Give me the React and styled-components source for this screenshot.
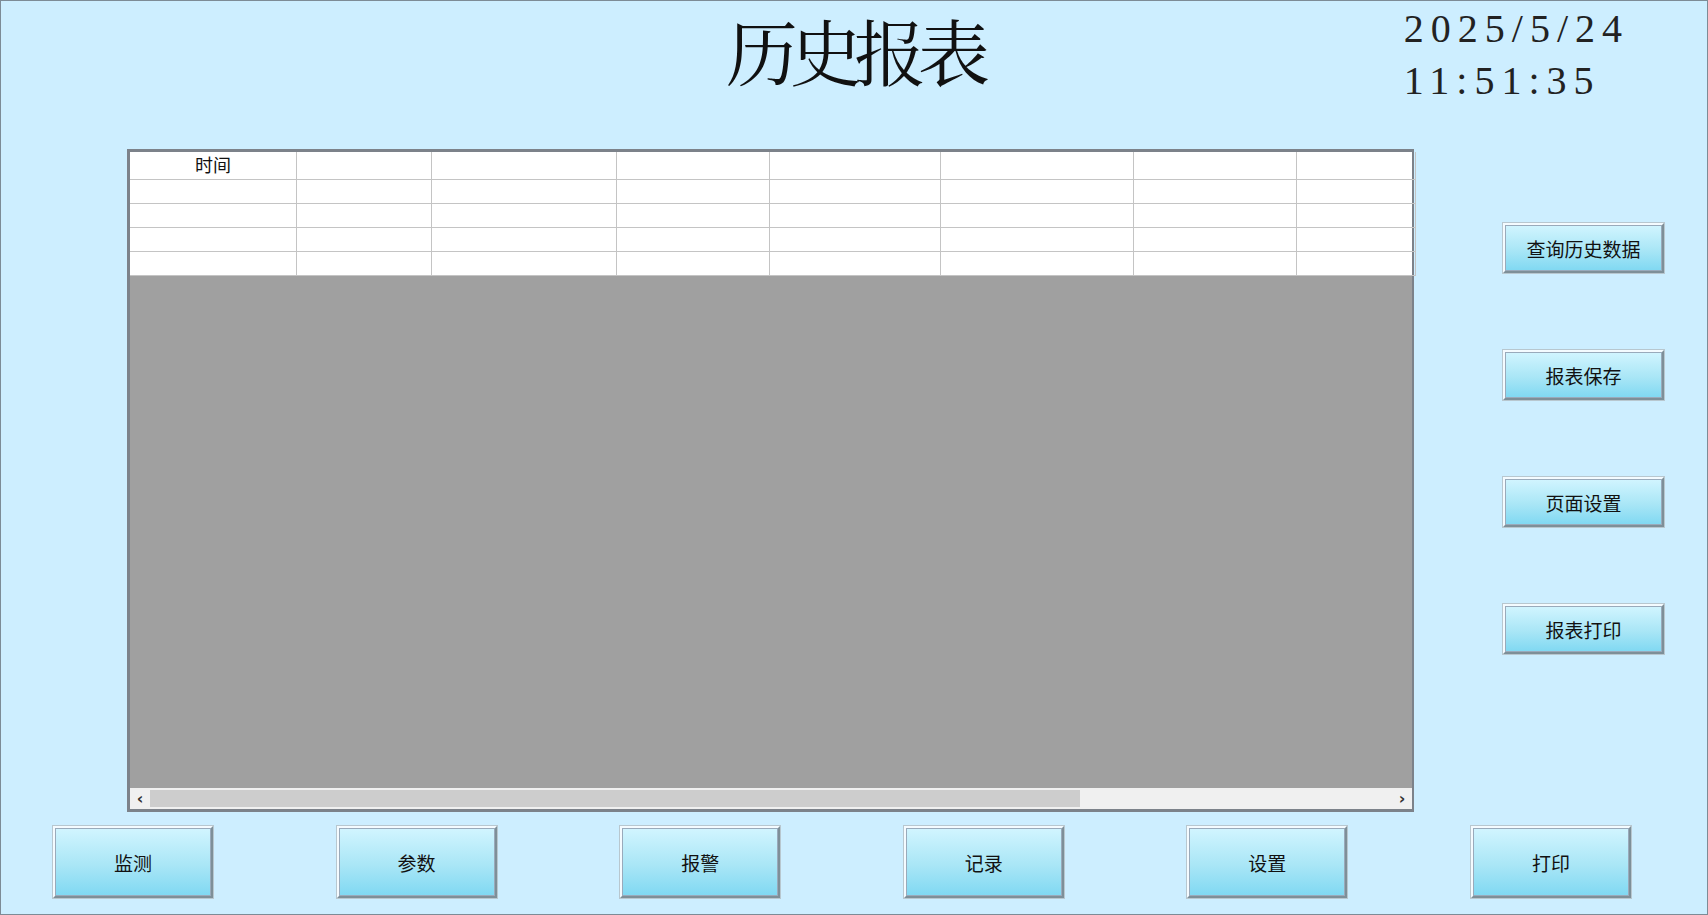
import styled, { createGlobalStyle } from "styled-components";

const Global = createGlobalStyle`
  html, body { margin: 0; padding: 0; }
  body { font-family: "Noto Sans CJK SC", "Liberation Sans", sans-serif; }
`;

const cols = [167, 135, 185, 153, 171, 193, 163, 119];
const rows = 5;

const Screen = styled.div`
  width: 1708px;
  height: 915px;
  box-sizing: border-box;
  background: #cdeeff;
  border: 1px solid #7d8b96;
  display: flex;
  flex-direction: column;
  overflow: hidden;
`;

const Header = styled.div`
  height: 148px;
  display: grid;
  grid-template-columns: 1fr auto 1fr;
  align-items: start;
`;

const Title = styled.h1`
  grid-column: 2;
  margin: 0;
  font-family: "Noto Serif CJK SC", "Noto Sans CJK SC", serif;
  font-weight: 400;
  font-size: 72px;
  line-height: 96px;
  letter-spacing: -8px;
  color: #111;
`;

const Clock = styled.div`
  grid-column: 3;
  justify-self: end;
  margin-right: 78px;
  padding-top: 2px;
  font-family: "Liberation Serif", serif;
  font-size: 40px;
  letter-spacing: 7px;
  line-height: 52px;
  color: #222;
`;

const Main = styled.div`
  display: flex;
  height: 663px;
  padding-left: 126px;
`;

const Table = styled.div`
  width: 1287px;
  height: 663px;
  box-sizing: border-box;
  border: 3px solid #7c828a;
  border-right-width: 2px;
  background: #a0a0a0;
  display: flex;
  flex-direction: column;
`;

const Grid = styled.div`
  display: grid;
  grid-template-columns: ${cols.map((c) => c + "px").join(" ")};
  background: #fff;
`;

const Cell = styled.div`
  height: ${(p) => (p.$head ? 27 : 23)}px;
  border-right: 1px solid #c4c4c4;
  border-bottom: 1px solid #c4c4c4;
  font-size: 18px;
  line-height: 25px;
  text-align: center;
  color: #111;
`;

const Gray = styled.div`
  flex: 1;
`;

const Scroll = styled.div`
  height: 21px;
  background: #f0f0f0;
  display: flex;
  align-items: center;
  font-size: 16px;
  color: #333;
`;

const Arrow = styled.div`
  width: 20px;
  text-align: center;
  font-family: "DejaVu Sans", sans-serif;
  font-weight: 700;
`;

const Track = styled.div`
  flex: 1;
  height: 100%;
  display: flex;
  align-items: center;
`;

const Thumb = styled.div`
  width: 930px;
  height: 17px;
  background: #cdcdcd;
`;

const Side = styled.div`
  flex: 1;
  display: flex;
  flex-direction: column;
  align-items: flex-start;
  padding-left: 89px;
  padding-top: 74px;
  gap: 77px;
`;

const Button = styled.button`
  width: ${(p) => p.$w}px;
  height: ${(p) => p.$h}px;
  box-sizing: border-box;
  border: 2px solid;
  border-color: #f4fbff #7e8f98 #7e8f98 #f4fbff;
  box-shadow: 0 0 0 1px #b8c7cf, inset 0 0 0 1px #9ab;
  background: linear-gradient(#d2f5ff, #a9e6f6 55%, #7fd8f2);
  font-family: "Noto Sans CJK SC", sans-serif;
  font-size: 19px;
  color: #111;
  padding: 0;
`;

const Footer = styled.div`
  flex: 1;
  display: flex;
  justify-content: space-between;
  align-items: flex-start;
  padding: 14px 76px 0 52px;
`;

export default function App() {
  const side = ["查询历史数据", "报表保存", "页面设置", "报表打印"];
  const nav = ["监测", "参数", "报警", "记录", "设置", "打印"];
  return (
    <>
      <Global />
      <Screen>
        <Header>
          <Title>历史报表</Title>
          <Clock>
            <div>2025/5/24</div>
            <div>11:51:35</div>
          </Clock>
        </Header>
        <Main>
          <Table>
            <Grid>
              {Array.from({ length: rows }).flatMap((_, r) =>
                cols.map((_, c) => (
                  <Cell key={r + "-" + c} $head={r === 0}>
                    {r === 0 && c === 0 ? "时间" : ""}
                  </Cell>
                ))
              )}
            </Grid>
            <Gray />
            <Scroll>
              <Arrow>‹</Arrow>
              <Track>
                <Thumb />
              </Track>
              <Arrow>›</Arrow>
            </Scroll>
          </Table>
          <Side>
            {side.map((s) => (
              <Button key={s} $w={161} $h={50}>
                {s}
              </Button>
            ))}
          </Side>
        </Main>
        <Footer>
          {nav.map((n) => (
            <Button key={n} $w={160} $h={72}>
              {n}
            </Button>
          ))}
        </Footer>
      </Screen>
    </>
  );
}
